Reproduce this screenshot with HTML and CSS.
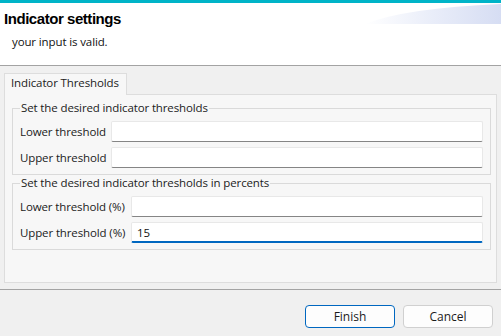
FILE: index.html
```html
<!DOCTYPE html>
<html lang="en">
<head>
<meta charset="utf-8">
<title>Indicator settings</title>
<link rel="stylesheet" href="styles.css">
</head>
<body>
<div class="dialog">
  <header class="header">
    <div class="accent"></div>
    <svg class="swoosh" width="136" height="20" viewBox="0 0 136 20" aria-hidden="true">
      <defs>
        <linearGradient id="sw" x1="0" y1="0" x2="1" y2="0">
          <stop offset="0" stop-color="#ffffff"/>
          <stop offset="0.5" stop-color="#e9edf9"/>
          <stop offset="1" stop-color="#d6ddf3"/>
        </linearGradient>
      </defs>
      <path d="M0 20 Q40 4 136 0 L136 20 Z" fill="url(#sw)"/>
    </svg>
    <h1 class="title">Indicator settings</h1>
    <p class="message">your input is valid.</p>
  </header>
  <main class="main">
    <div class="tabs">
      <div class="tab">Indicator Thresholds</div>
    </div>
    <section class="panel">
      <fieldset class="group">
        <legend class="legend">Set the desired indicator thresholds</legend>
        <div class="row">
          <label class="label label-short">Lower threshold</label>
          <input class="field" type="text" value="">
        </div>
        <div class="row">
          <label class="label label-short">Upper threshold</label>
          <input class="field" type="text" value="">
        </div>
      </fieldset>
      <fieldset class="group">
        <legend class="legend">Set the desired indicator thresholds in percents</legend>
        <div class="row">
          <label class="label label-long">Lower threshold (%)</label>
          <input class="field" type="text" value="">
        </div>
        <div class="row">
          <label class="label label-long">Upper threshold (%)</label>
          <input class="field field-focus" type="text" value="15">
        </div>
      </fieldset>
    </section>
  </main>
  <footer class="footer">
    <button class="btn btn-default" type="button">Finish</button>
    <button class="btn" type="button">Cancel</button>
  </footer>
</div>
</body>
</html>
```

FILE: styles.css
```css
* { box-sizing: border-box; }

html, body {
  margin: 0;
  padding: 0;
  width: 501px;
  height: 336px;
  overflow: hidden;
  background: #f0f0f0;
}

body {
  font-family: "Open Sans", "Noto Sans", sans-serif;
  font-size: 11.5px;
  line-height: 16px;
  letter-spacing: -0.12px;
  color: #1b1b1b;
}

.dialog {
  width: 501px;
  height: 336px;
  display: flex;
  flex-direction: column;
}

.header {
  position: relative;
  height: 66px;
  background: #ffffff;
  border-bottom: 1px solid #a3a3a3;
}

.accent {
  height: 3px;
  background: #00b4c8;
}

.swoosh {
  position: absolute;
  right: 0;
  top: 4px;
  display: block;
}

.title {
  position: relative;
  margin: 7px 0 0 4px;
  font-family: "Liberation Sans", Arial, sans-serif;
  font-weight: bold;
  font-size: 15px;
  line-height: 18px;
  letter-spacing: -0.45px;
  color: #000000;
}

.message {
  margin: 6px 0 0 12px;
  color: #111111;
}

.main {
  padding: 7px 4px 6px 4px;
}

.tabs {
  display: flex;
}

.tab {
  position: relative;
  width: 123px;
  height: 22px;
  margin-bottom: -1px;
  padding: 1px 0 0 6px;
  background: #f7f7f7;
  border: 1px solid #dddddd;
  border-bottom: none;
  color: #1b1b1b;
  white-space: nowrap;
}

.panel {
  background: #f7f7f7;
  border: 1px solid #dddddd;
  padding: 5px 5px 32px 7px;
}

.group {
  margin: 0;
  min-width: 0;
  border: 1px solid #dadada;
  padding: 5px 7px 6px 7px;
  display: flex;
  flex-direction: column;
  gap: 5px;
}

.legend {
  padding: 0 1px;
  line-height: 16px;
  color: #1b1b1b;
}

.row {
  display: flex;
  align-items: center;
  height: 21px;
}

.label {
  flex: none;
  white-space: nowrap;
  color: #1b1b1b;
}

.label-short { width: 91px; }
.label-long { width: 111px; }

.field {
  flex: 1;
  min-width: 0;
  height: 21px;
  margin: 0;
  padding: 0 5px;
  background: #ffffff;
  border: 1px solid #e8e8e8;
  border-bottom: 1px solid #858585;
  border-radius: 2px;
  font: inherit;
  color: #111111;
  outline: none;
}

.field-focus {
  border-bottom: 2px solid #0067c0;
  padding-top: 1px;
}

.footer {
  flex: 1;
  border-top: 1px solid #a3a3a3;
  background: #f0f0f0;
  display: flex;
  justify-content: flex-end;
  align-items: flex-start;
  gap: 8px;
  padding: 15px 8px 0 0;
}

.btn {
  width: 90px;
  height: 23px;
  margin: 0;
  padding: 0;
  background: #fdfdfd;
  border: 1px solid #d0d0d0;
  border-radius: 4px;
  font: inherit;
  font-size: 12px;
  color: #1b1b1b;
}

.btn-default {
  border-color: #0067c0;
}
```
